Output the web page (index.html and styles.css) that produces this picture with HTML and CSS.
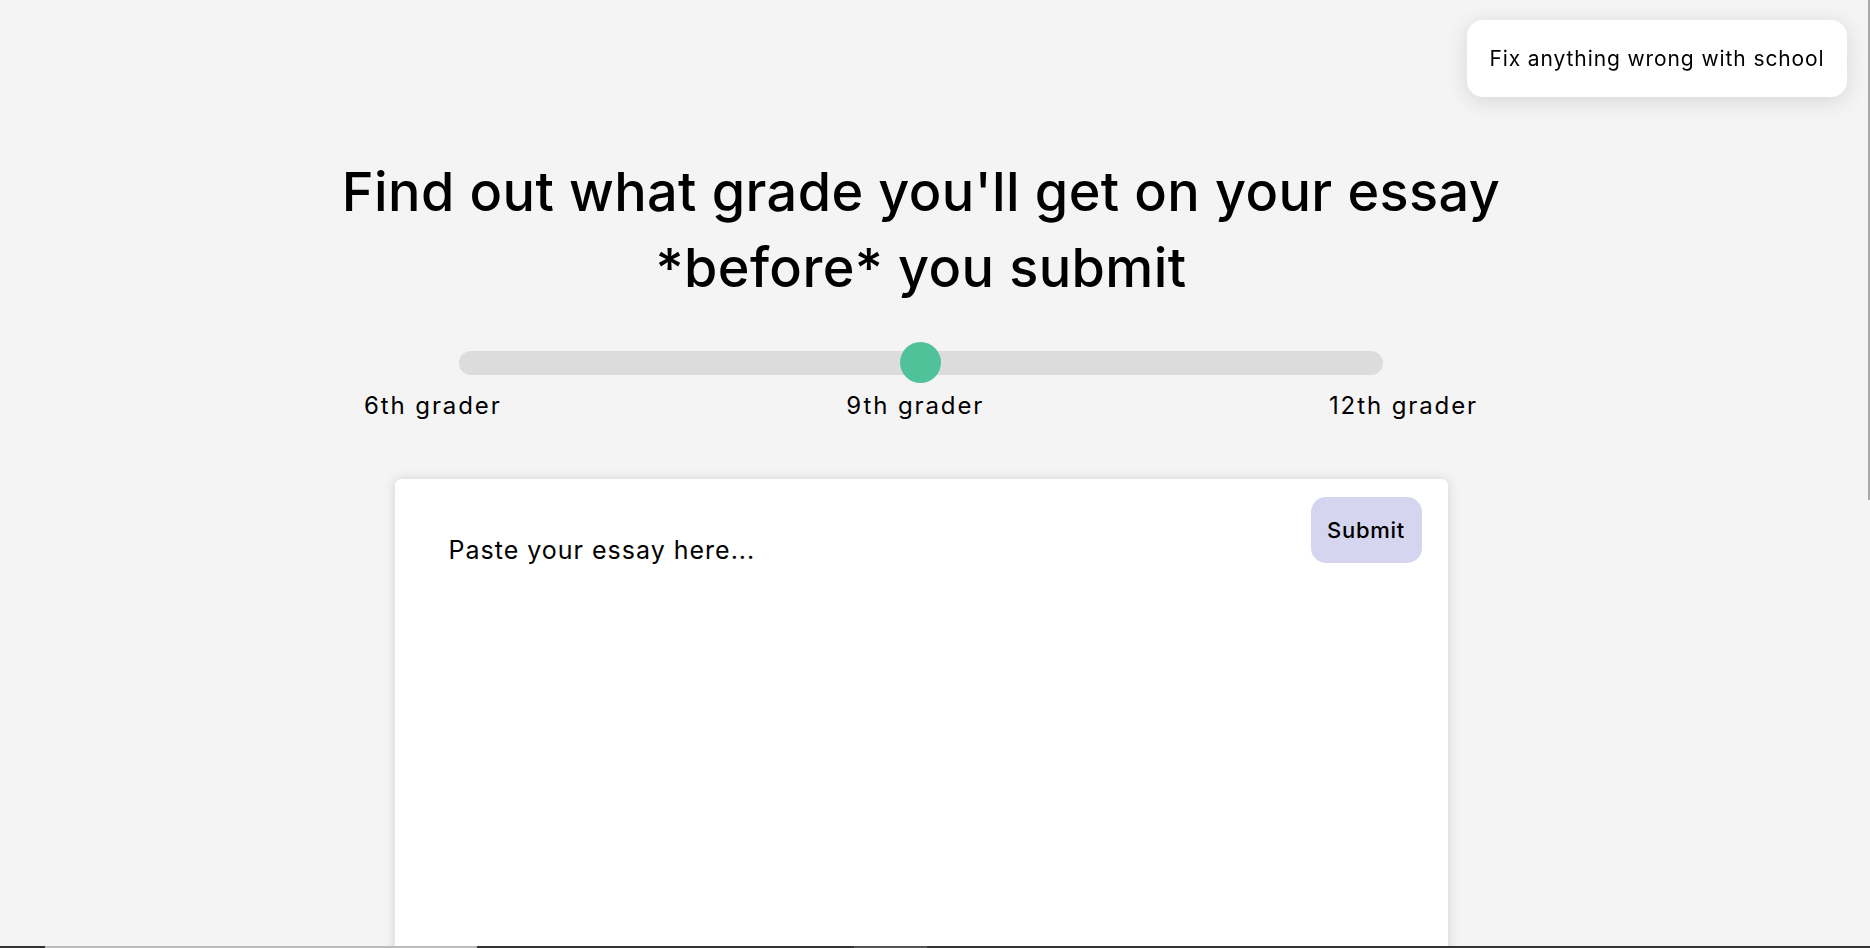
FILE: index.html
```html
<!DOCTYPE html>
<html lang="en">
<head>
<meta charset="utf-8">
<title>Essay Grader</title>
<link rel="stylesheet" href="styles.css">
</head>
<body>
<div class="toast">Fix anything wrong with school</div>
<main class="page">
  <h1 class="title">Find out what grade you'll get on your essay<br>*before* you submit</h1>
  <div class="slider">
    <div class="track"></div>
    <div class="knob"></div>
  </div>
  <div class="labels">
    <span>6th grader</span>
    <span>9th grader</span>
    <span>12th grader</span>
  </div>
  <div class="card">
    <textarea class="essay" placeholder="Paste your essay here..."></textarea>
    <button class="submit">Submit</button>
  </div>
</main>
<div class="edge-line"></div>
<div class="bottom-bar">
  <span class="seg seg-dark seg-a"></span>
  <span class="seg seg-light seg-b"></span>
  <span class="seg seg-dark seg-c"></span>
  <span class="seg seg-mid seg-d"></span>
  <span class="seg seg-dark seg-e"></span>
</div>
</body>
</html>
```
FILE: styles.css
```css
html, body {
  margin: 0;
  padding: 0;
  height: 100%;
  overflow: hidden;
}
body {
  background: #f4f4f4;
  font-family: "Inter", "Noto Sans", sans-serif;
  color: #000;
}
.page {
  display: flex;
  flex-direction: column;
  align-items: center;
  padding-top: 154px;
  padding-right: 28px;
}
.title {
  margin: 0;
  font-size: 54px;
  font-weight: 500;
  line-height: 76px;
  text-align: center;
  letter-spacing: 0.4px;
}
.slider {
  position: relative;
  width: 924px;
  height: 41px;
  margin-top: 36px;
  display: flex;
  align-items: center;
}
.track {
  width: 100%;
  height: 24px;
  border-radius: 12px;
  background: #dcdcdc;
}
.knob {
  position: absolute;
  left: 441px;
  top: 0;
  width: 41px;
  height: 41px;
  border-radius: 50%;
  background: #4fc29a;
}
.labels {
  width: 1114px;
  margin-top: 6px;
  display: flex;
  justify-content: space-between;
  font-size: 24px;
  line-height: 33px;
  letter-spacing: 1.9px;
}
.card {
  position: relative;
  width: 1053px;
  height: 620px;
  margin-top: 57px;
  background: #fff;
  border-radius: 6px;
  box-shadow: 0 0 12px rgba(0, 0, 0, 0.14);
  display: flex;
}
.essay {
  flex: 1;
  border: none;
  outline: none;
  resize: none;
  background: transparent;
  padding: 53px 54px;
  font-family: "Inter", "Noto Sans", sans-serif;
  font-size: 25px;
  line-height: 36px;
  letter-spacing: 1px;
  color: #000;
}
.essay::placeholder {
  color: #000;
  opacity: 1;
}
.submit {
  position: absolute;
  top: 18px;
  right: 26px;
  width: 111px;
  height: 66px;
  border: none;
  border-radius: 15px;
  background: #d5d5ef;
  font-family: "Inter", "Noto Sans", sans-serif;
  font-size: 22px;
  font-weight: 500;
  letter-spacing: 0.7px;
  color: #000;
  display: flex;
  align-items: center;
  justify-content: center;
  padding: 0;
}
.toast {
  position: fixed;
  top: 20px;
  right: 23px;
  width: 380px;
  height: 77px;
  box-sizing: border-box;
  background: #fff;
  border-radius: 16px;
  box-shadow: 0 4px 22px rgba(0, 0, 0, 0.12);
  display: flex;
  align-items: center;
  justify-content: center;
  font-size: 21px;
  letter-spacing: 0.9px;
  z-index: 5;
}
.edge-line {
  position: fixed;
  top: 0;
  right: 0;
  width: 2px;
  height: 500px;
  background: #a9a9a9;
}
.bottom-bar {
  position: fixed;
  left: 0;
  right: 0;
  bottom: 0;
  height: 2px;
  display: flex;
}
.seg { height: 100%; display: block; }
.seg-dark { background: #333; }
.seg-light { background: #bbb; }
.seg-mid { background: #555; }
.seg-a { width: 45px; }
.seg-b { width: 432px; }
.seg-c { width: 377px; }
.seg-d { width: 73px; }
.seg-e { flex: 1; }
```
